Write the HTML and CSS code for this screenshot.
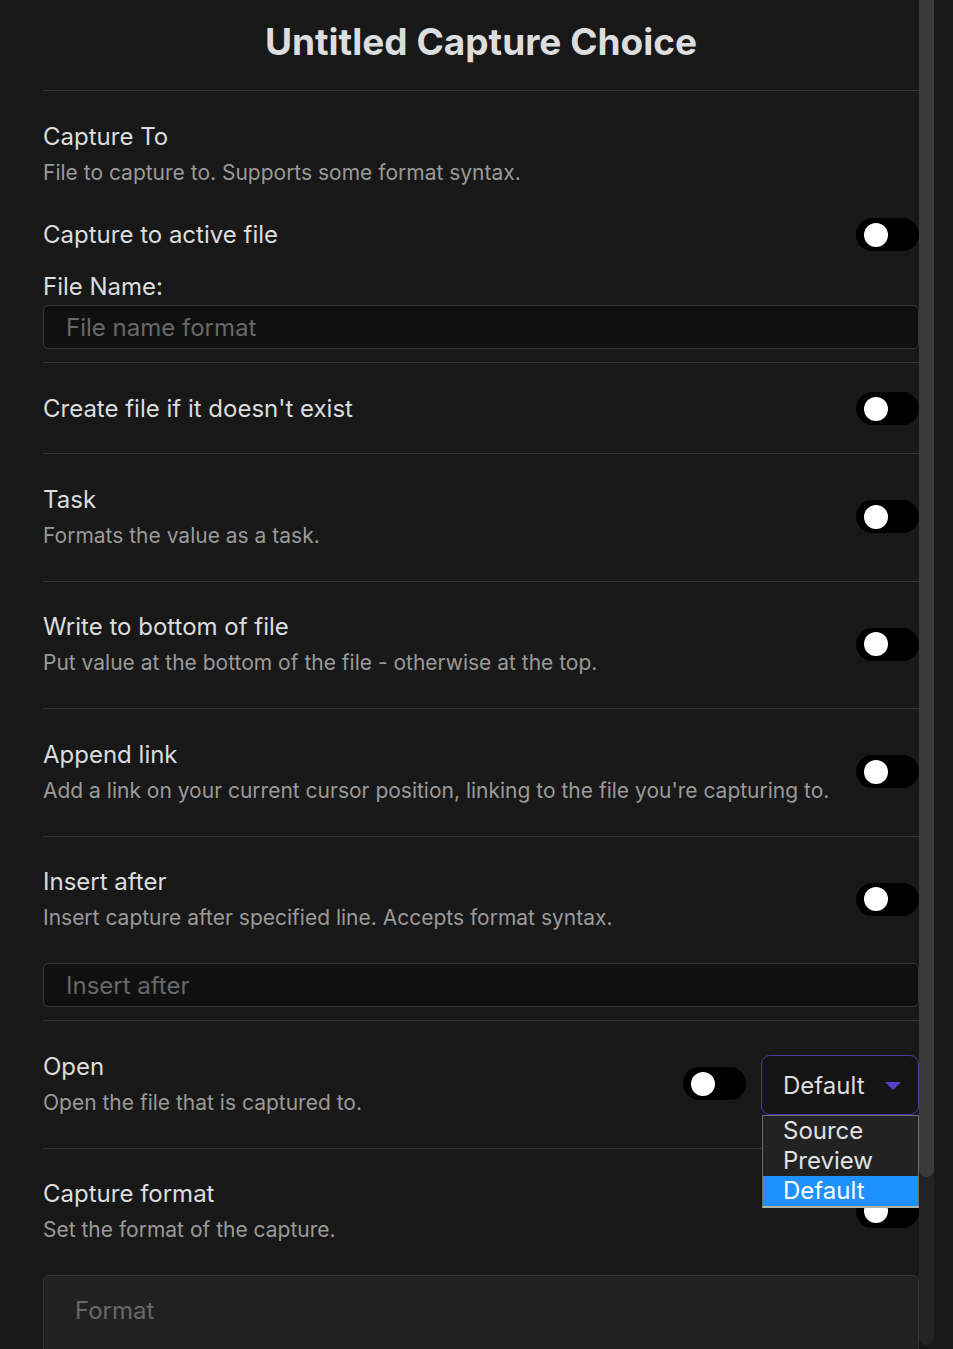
FILE: index.html
```html
<!DOCTYPE html>
<html lang="en">
<head>
<meta charset="utf-8">
<title>Untitled Capture Choice</title>
<link rel="stylesheet" href="styles.css">
</head>
<body>
<div class="window">
  <div class="modal">
    <div class="content">
      <h2 class="title">Untitled Capture Choice</h2>

      <div class="group">
        <div class="setting top">
          <div class="info">
            <div class="name">Capture To</div>
            <div class="desc">File to capture to. Supports some format syntax.</div>
          </div>
        </div>
        <div class="setting flat">
          <div class="info">
            <div class="name">Capture to active file</div>
          </div>
          <div class="toggle"><span class="knob"></span></div>
        </div>
        <div class="label">File Name:</div>
        <div class="input"><span class="placeholder">File name format</span></div>
      </div>

      <div class="setting bordered single">
        <div class="info">
          <div class="name">Create file if it doesn't exist</div>
        </div>
        <div class="toggle"><span class="knob"></span></div>
      </div>

      <div class="setting bordered">
        <div class="info">
          <div class="name">Task</div>
          <div class="desc">Formats the value as a task.</div>
        </div>
        <div class="toggle"><span class="knob"></span></div>
      </div>

      <div class="setting bordered">
        <div class="info">
          <div class="name">Write to bottom of file</div>
          <div class="desc">Put value at the bottom of the file - otherwise at the top.</div>
        </div>
        <div class="toggle"><span class="knob"></span></div>
      </div>

      <div class="setting bordered">
        <div class="info">
          <div class="name">Append link</div>
          <div class="desc">Add a link on your current cursor position, linking to the file you're capturing to.</div>
        </div>
        <div class="toggle"><span class="knob"></span></div>
      </div>

      <div class="group bordered">
        <div class="setting">
          <div class="info">
            <div class="name">Insert after</div>
            <div class="desc">Insert capture after specified line. Accepts format syntax.</div>
          </div>
          <div class="toggle"><span class="knob"></span></div>
        </div>
        <div class="input"><span class="placeholder">Insert after</span></div>
      </div>

      <div class="setting bordered">
        <div class="info">
          <div class="name">Open</div>
          <div class="desc">Open the file that is captured to.</div>
        </div>
        <div class="toggle"><span class="knob"></span></div>
        <div class="select-wrap">
          <div class="select">
            <span>Default</span>
            <svg class="caret" width="16" height="8" viewBox="0 0 16 8"><path d="M0 0 H16 L8 8 Z" fill="#5a43c9"/></svg>
          </div>
          <ul class="dropdown">
            <li>Source</li>
            <li>Preview</li>
            <li class="selected">Default</li>
          </ul>
        </div>
      </div>

      <div class="setting bordered">
        <div class="info">
          <div class="name">Capture format</div>
          <div class="desc">Set the format of the capture.</div>
        </div>
        <div class="toggle"><span class="knob"></span></div>
      </div>

      <div class="textarea"><span class="placeholder">Format</span></div>
    </div>
  </div>
  <div class="scrollbar"><div class="thumb"></div></div>
</div>
</body>
</html>
```

FILE: styles.css
```css
* { box-sizing: border-box; }

html, body {
  margin: 0;
  padding: 0;
  background: #181818;
  font-family: Inter, "Noto Sans", sans-serif;
}

.window {
  display: flex;
  align-items: flex-start;
  height: 1349px;
  overflow: hidden;
}

.modal {
  width: 919px;
  height: 1349px;
  overflow: hidden;
  flex: none;
}

.scrollbar {
  width: 15px;
  height: 1345px;
  flex: none;
  background: #232323;
  border-radius: 0 0 8px 8px;
}
.thumb {
  height: 1177px;
  background: #3a3a3a;
  border-radius: 0 0 8px 8px;
}

.content {
  padding-left: 43px;
}

.title {
  margin: 0;
  height: 91px;
  line-height: 84px;
  text-align: center;
  font-size: 37px;
  font-weight: 700;
  color: #dcddde;
  border-bottom: 1px solid #333;
}

.setting {
  display: flex;
  align-items: center;
  gap: 15px;
  padding: 29.5px 0 31px;
}
.setting.bordered, .group.bordered {
  border-top: 1px solid #333;
}
.setting.top {
  padding: 30px 0 31px;
}
.setting.flat {
  padding: 0;
}
.setting.single {
  padding: 29px 0 28px;
}

.info {
  flex: 1;
  min-width: 0;
}

.name {
  font-size: 24px;
  line-height: 32px;
  color: #dcddde;
}

.desc {
  margin-top: 6px;
  font-size: 21px;
  line-height: 28px;
  color: #9a9a9a;
}

.label {
  margin-top: 20px;
  font-size: 24px;
  line-height: 32px;
  color: #dcddde;
}

.group {
  padding-bottom: 13px;
}

.input {
  margin-top: 2px;
  height: 44px;
  border: 1px solid #363636;
  border-radius: 5px;
  background: #101010;
  display: flex;
  align-items: center;
  padding-left: 22px;
}
.group.bordered .input {
  margin-top: 0;
}

.placeholder {
  font-size: 24px;
  color: #686868;
}

.toggle {
  width: 63px;
  height: 33px;
  flex: none;
  border-radius: 17px;
  background: #000;
  display: flex;
  align-items: center;
  padding-left: 8px;
}
.knob {
  width: 24px;
  height: 24px;
  border-radius: 50%;
  background: #fff;
}

.select-wrap {
  position: relative;
  flex: none;
  margin-top: 3px;
}
.select {
  width: 158px;
  height: 60px;
  border: 1px solid #4a3a9c;
  border-radius: 9px;
  background: #141414;
  display: flex;
  align-items: center;
  justify-content: space-between;
  padding: 0 17px 0 21px;
  font-size: 24px;
  color: #dcddde;
}
.caret {
  margin-top: 2px;
}

.dropdown {
  position: absolute;
  top: 60px;
  left: 1px;
  width: 157px;
  margin: 0;
  padding: 0;
  list-style: none;
  background: #222;
  border: 1px solid #6e6e6e;
  border-bottom: 2px solid #b0b0b0;
  z-index: 10;
}
.dropdown li {
  height: 30px;
  line-height: 30px;
  padding-left: 20px;
  font-size: 24px;
  color: #e2e2e2;
}
.dropdown li.selected {
  background: #1e90ff;
  color: #fff;
}

.textarea {
  height: 160px;
  border: 1px solid #333;
  border-radius: 6px;
  background: #212121;
  padding: 20px 31px;
  line-height: 30px;
}
```
